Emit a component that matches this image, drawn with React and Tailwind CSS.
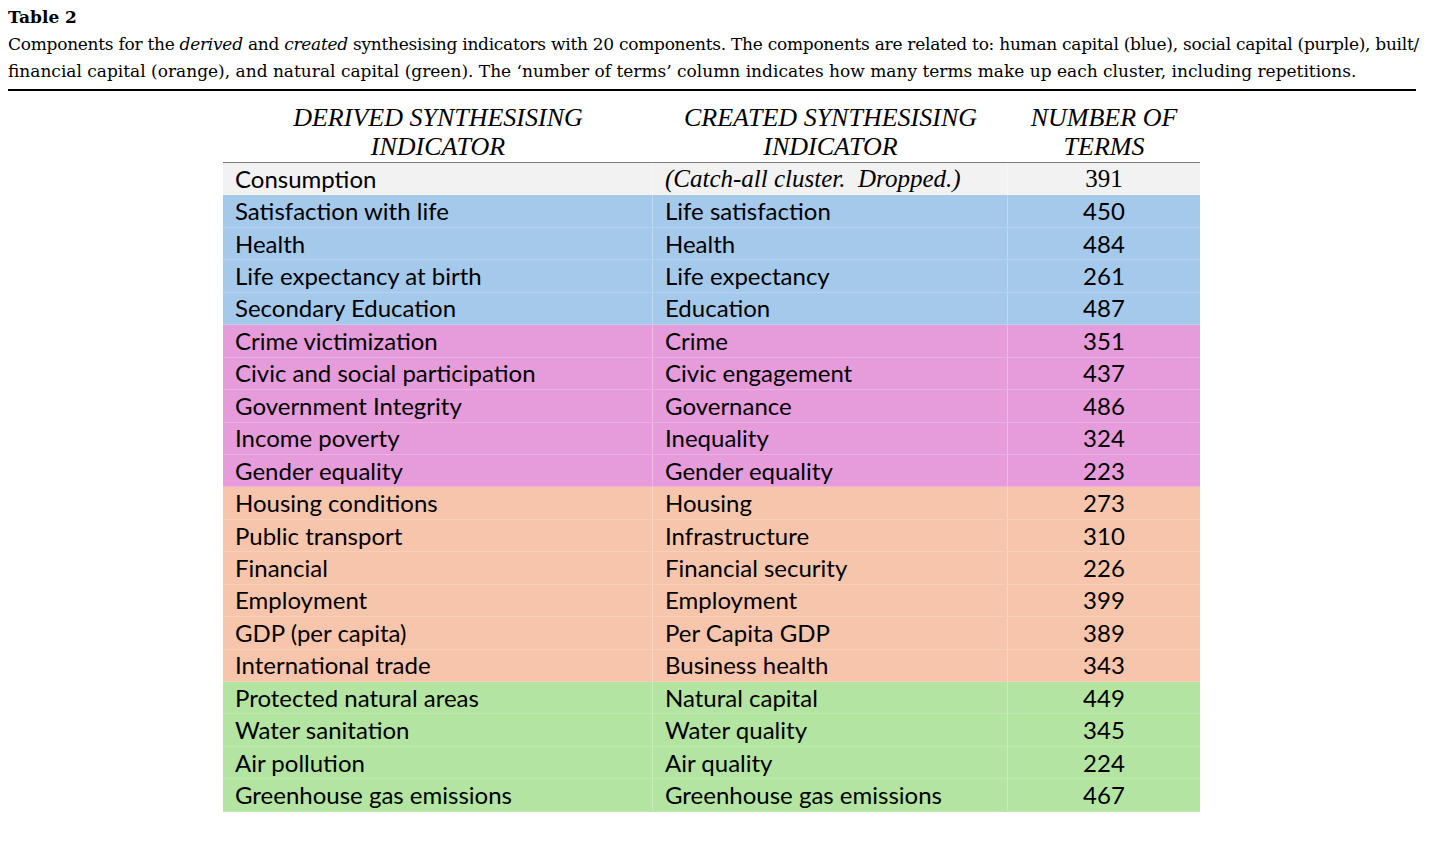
import React from 'react';

const rows = [
  ['Consumption', '(Catch-all cluster.  Dropped.)', '391', 'gray'],
  ['Satisfaction with life', 'Life satisfaction', '450', 'blue'],
  ['Health', 'Health', '484', 'blue'],
  ['Life expectancy at birth', 'Life expectancy', '261', 'blue'],
  ['Secondary Education', 'Education', '487', 'blue'],
  ['Crime victimization', 'Crime', '351', 'purple'],
  ['Civic and social participation', 'Civic engagement', '437', 'purple'],
  ['Government Integrity', 'Governance', '486', 'purple'],
  ['Income poverty', 'Inequality', '324', 'purple'],
  ['Gender equality', 'Gender equality', '223', 'purple'],
  ['Housing conditions', 'Housing', '273', 'orange'],
  ['Public transport', 'Infrastructure', '310', 'orange'],
  ['Financial', 'Financial security', '226', 'orange'],
  ['Employment', 'Employment', '399', 'orange'],
  ['GDP (per capita)', 'Per Capita GDP', '389', 'orange'],
  ['International trade', 'Business health', '343', 'orange'],
  ['Protected natural areas', 'Natural capital', '449', 'green'],
  ['Water sanitation', 'Water quality', '345', 'green'],
  ['Air pollution', 'Air quality', '224', 'green'],
  ['Greenhouse gas emissions', 'Greenhouse gas emissions', '467', 'green'],
];

const bg = {
  gray: 'bg-[#f2f2f2]',
  blue: 'bg-[#a5c9eb]',
  purple: 'bg-[#e69bda]',
  orange: 'bg-[#f6c5ab]',
  green: 'bg-[#b4e4a1]',
};

const serif = "font-['Liberation_Serif',serif]";
const caption = "font-['DejaVu_Serif',serif]";
const body = "font-['Lato',sans-serif]";

export default function App() {
  return (
    <div className="w-[1456px] h-[842px] bg-white text-black overflow-hidden">
      <div className={`px-2 pt-[4px] ${caption} text-[17px] leading-[27px] whitespace-nowrap`}>
        <div className="font-bold">Table 2</div>
        <p className="tracking-[-0.27px]">
          Components for the <i>derived</i> and <i>created</i> synthesising indicators with 20 components. The
          components are related to: human capital (blue), social capital (purple), built/
        </p>
        <p>
          financial capital (orange), and natural capital (green). The ‘number of terms’ column indicates how many
          terms make up each cluster, including repetitions.
        </p>
        <div className="mt-[4px] w-[1408px] h-[2px] bg-black" />
      </div>

      <div className="ml-[223px] mt-[12px] w-[977px]">
        <div className={`flex h-[60px] ${serif} italic text-[26px] leading-[29px] border-b-[1.5px] border-[#7a7a7a]`}>
          <div className="w-[430px] text-center">DERIVED SYNTHESISING<br />INDICATOR</div>
          <div className="w-[355px] text-center">CREATED SYNTHESISING<br />INDICATOR</div>
          <div className="w-[192px] text-center">NUMBER OF<br />TERMS</div>
        </div>
        {rows.map(([a, b, n, c], i) => (
          <div
            key={i}
            className={`flex h-[32.45px] items-center ${bg[c]} border-b border-white/20 text-[24px] ${body}`}
          >
            <div className="w-[430px] h-full flex items-center pl-3 border-r border-white/30">{a}</div>
            {i === 0 ? (
              <div className={`w-[355px] h-full flex items-center pl-3 border-r border-white/30 ${serif} italic text-[25px] whitespace-pre`}>
                {b}
              </div>
            ) : (
              <div className="w-[355px] h-full flex items-center pl-3 border-r border-white/30">{b}</div>
            )}
            <div className={`w-[192px] h-full flex items-center justify-center ${i === 0 ? `${serif} text-[25px]` : ''}`}>
              {n}
            </div>
          </div>
        ))}
      </div>
    </div>
  );
}
